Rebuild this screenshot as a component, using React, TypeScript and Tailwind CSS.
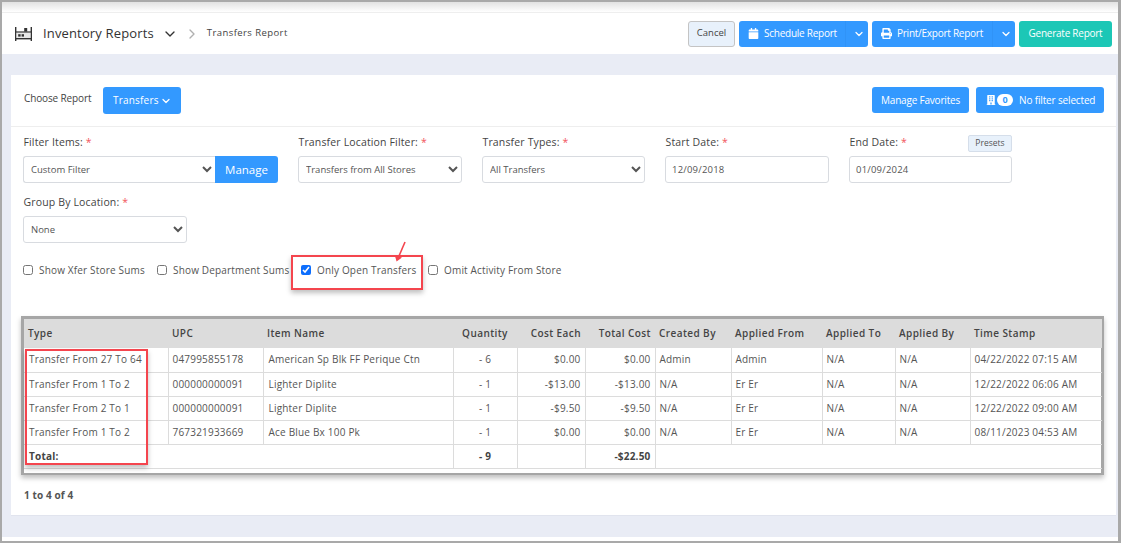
import type { ReactNode } from "react";
import { ChevronDown, ChevronRight } from "lucide-react";
import { FaBuilding, FaCalendar, FaPrint } from "react-icons/fa";

const fieldClass =
  "block h-[27px] rounded-[3px] border border-[#d8dbe0] bg-white text-[9.5px] text-[#555] outline-none";

const Label = ({ text }: { text: string }) => (
  <div className="mb-[7px] h-[14px] pl-[0.5px] text-[10.5px] leading-[14px] tracking-[0.15px] text-[#444]">
    {text} <span className="text-[#f2545b]">*</span>
  </div>
);

const SelectField = ({ label, value, width }: { label: string; value: string; width: string }) => (
  <div className={width}>
    <Label text={label} />
    <select defaultValue={value} className={`${fieldClass} w-full px-[3px]`}>
      <option>{value}</option>
    </select>
  </div>
);

const DateField = ({ label, value, width }: { label: string; value: string; width: string }) => (
  <div className={width}>
    <Label text={label} />
    <input readOnly value={value} className={`${fieldClass} w-full px-[6px] tracking-[0.2px]`} />
  </div>
);

const Check = ({ text, checked, className }: { text: string; checked?: boolean; className: string }) => (
  <label className={`flex items-center gap-[6px] text-[10px] tracking-[0.17px] whitespace-nowrap text-[#555] ${className}`}>
    <input type="checkbox" readOnly checked={!!checked} className="m-0 h-[10px] w-[10px] accent-[#0d6efd]" />
    {text}
  </label>
);

const blueBtn = "flex items-center rounded-[3px] bg-[#3399ff] text-[10px] text-white";

const SplitButton = ({ icon, text, width }: { icon: ReactNode; text: string; width: string }) => (
  <div className={`${blueBtn} h-[26px] ${width}`}>
    <span className="flex flex-1 items-center gap-[5px] pl-[9px] tracking-[-0.25px]">
      {icon}
      {text}
    </span>
    <span className="flex h-full w-[23px] items-center justify-center border-l border-[#3093f7] pl-[4px]">
      <ChevronDown size={12} strokeWidth={2.5} />
    </span>
  </div>
);

const columns = [
  { title: "Type", width: "w-[144px]", head: "text-left" },
  { title: "UPC", width: "w-[95px]", head: "text-left" },
  { title: "Item Name", width: "w-[190px]", head: "text-left" },
  { title: "Quantity", width: "w-[64px]", head: "text-center" },
  { title: "Cost Each", width: "w-[68px]", head: "text-right" },
  { title: "Total Cost", width: "w-[70px]", head: "text-right" },
  { title: "Created By", width: "w-[76px]", head: "text-left" },
  { title: "Applied From", width: "w-[91px]", head: "text-left" },
  { title: "Applied To", width: "w-[73px]", head: "text-left" },
  { title: "Applied By", width: "w-[75px]", head: "text-left" },
  { title: "Time Stamp", width: "w-[132px]", head: "text-left" },
];

const rows = [
  ["Transfer From 27 To 64", "047995855178", "American Sp Blk FF Perique Ctn", "- 6", "$0.00", "$0.00", "Admin", "Admin", "N/A", "N/A", "04/22/2022 07:15 AM"],
  ["Transfer From 1 To 2", "000000000091", "Lighter Diplite", "- 1", "-$13.00", "-$13.00", "N/A", "Er Er", "N/A", "N/A", "12/22/2022 06:06 AM"],
  ["Transfer From 2 To 1", "000000000091", "Lighter Diplite", "- 1", "-$9.50", "-$9.50", "N/A", "Er Er", "N/A", "N/A", "12/22/2022 09:00 AM"],
  ["Transfer From 1 To 2", "767321933669", "Ace Blue Bx 100 Pk", "- 1", "$0.00", "$0.00", "N/A", "Er Er", "N/A", "N/A", "08/11/2023 04:53 AM"],
];

const cellClass = (i: number) =>
  `h-[24px] border-r border-b border-[#dcdcdc] last:border-r-0 ${
    i === 0 || i === 2 ? "pr-[4px] pl-[5px]" : "px-[4px]"
  } ${i === 3 ? "text-center" : i === 4 || i === 5 ? "text-right" : ""}`;

function WarehouseIcon() {
  return (
    <svg width="17" height="14" viewBox="0 0 17 14" fill="#333">
      <rect x="0" y="0" width="1.4" height="14" />
      <rect x="15.6" y="0" width="1.4" height="14" />
      <rect x="1" y="4.4" width="15" height="1.3" />
      <rect x="9.2" y="1" width="3" height="3.6" />
      <rect x="1" y="5.6" width="15" height="5.6" fill="#cfcfcf" opacity="0.45" />
      <rect x="3.2" y="7.2" width="2.4" height="2.4" />
      <rect x="6.6" y="7.2" width="2.4" height="2.4" />
      <rect x="1" y="11" width="15" height="1.4" />
    </svg>
  );
}

export default function App() {
  return (
    <div className="relative flex h-[544px] w-[1121px] flex-col overflow-hidden bg-white font-['Open_Sans',sans-serif]">
      <div className="flex h-[543px] flex-col border-t-2 border-r-[3px] border-b-2 border-l-2 border-[#a9a9a9] bg-white">
        <div className="h-[10px] bg-gradient-to-b from-[#e2e2e2] to-white" />

        <header className="flex h-[42px] items-center border-t border-[#eeeeee] bg-white pr-[6px] pl-[13px]">
          <WarehouseIcon />
          <span className="ml-[11px] text-[13px] tracking-[0.15px] text-[#333]">Inventory Reports</span>
          <ChevronDown size={16} strokeWidth={2} className="ml-[8px] text-[#333]" />
          <ChevronRight size={16} strokeWidth={2} className="ml-[6px] text-[#b0b0b0]" />
          <span className="ml-[7px] text-[9.5px] tracking-[0.42px] text-[#444]">Transfers Report</span>
          <div className="ml-auto flex items-center gap-[4px]">
            <button className="h-[26px] w-[47px] rounded-[3px] border border-[#c4c4c4] bg-[#e8f1fb] text-[9.5px] text-[#444]">
              Cancel
            </button>
            <SplitButton icon={<FaCalendar size={11} />} text="Schedule Report" width="w-[129px]" />
            <SplitButton icon={<FaPrint size={11} />} text="Print/Export Report" width="w-[143px]" />
            <button className="h-[26px] w-[93px] rounded-[3px] bg-[#1cc7b6] text-[10px] tracking-[-0.25px] text-white">
              Generate Report
            </button>
          </div>
        </header>

        <main className="h-[483px] bg-[#e9ecf5] pt-[21px] pl-[9px]">
          <section className="h-[441px] w-[1105px] border-b border-[#e1e4ee] bg-white">
            <div className="flex h-[52px] items-start border-b border-[#eeeeee] pt-[12px] pr-[12px] pl-[13px]">
              <span className="mt-[4px] text-[10px] tracking-[-0.13px] text-[#444]">Choose Report</span>
              <button className={`${blueBtn} ml-[12px] h-[27px] w-[78px] justify-center gap-[1px] tracking-[0.2px]`}>
                Transfers <ChevronDown size={12} strokeWidth={2.5} />
              </button>
              <button className={`${blueBtn} ml-auto h-[26px] w-[97px] justify-center tracking-[-0.2px]`}>
                Manage Favorites
              </button>
              <button className={`${blueBtn} ml-[7px] h-[26px] w-[128px] pl-[10px] tracking-[-0.15px]`}>
                <FaBuilding size={10} />
                <span className="ml-[1px] flex h-[12px] w-[16px] items-center justify-center rounded-full bg-white text-[9px] font-bold text-[#3399ff]">
                  0
                </span>
                <span className="ml-[6px]">No filter selected</span>
              </button>
            </div>

            <div className="relative px-[12px] pt-[8px]">
              <button className="absolute top-[8px] left-[957px] h-[17px] w-[44px] rounded-[2px] border border-[#d5deea] bg-[#e8f1fb] text-[8.5px] text-[#555]">
                Presets
              </button>
              <div className="flex gap-[20px]">
                <div className="w-[255px]">
                  <Label text="Filter Items:" />
                  <div className="flex">
                    <select defaultValue="Custom Filter" className={`${fieldClass} w-[192px] rounded-r-none border-r-0 px-[3px]`}>
                      <option>Custom Filter</option>
                    </select>
                    <button className={`${blueBtn} h-[27px] w-[63px] justify-center rounded-l-none text-[11.5px]`}>Manage</button>
                  </div>
                </div>
                <SelectField label="Transfer Location Filter:" value="Transfers from All Stores" width="w-[164px]" />
                <SelectField label="Transfer Types:" value="All Transfers" width="w-[163px]" />
                <DateField label="Start Date:" value="12/09/2018" width="w-[164px]" />
                <DateField label="End Date:" value="01/09/2024" width="w-[163px]" />
              </div>

              <div className="mt-[12px]">
                <SelectField label="Group By Location:" value="None" width="w-[164px]" />
              </div>

              <div className="mt-[20px] flex h-[14px] items-center">
                <Check text="Show Xfer Store Sums" className="w-[134px]" />
                <Check text="Show Department Sums" className="w-[144px]" />
                <Check checked text="Only Open Transfers" className="w-[127px]" />
                <Check text="Omit Activity From Store" className="" />
              </div>
            </div>

            <div className="mt-[39px] ml-[10px] w-[1083px] border-x-[3px] border-t-[3px] border-b-2 border-[#a6a6a6] pb-[4px] shadow-[0_3px_5px_rgba(0,0,0,0.25)]">
              <table className="w-[1077px] table-fixed border-collapse text-[10px] tracking-[0.2px] text-[#555]">
                <colgroup>
                  {columns.map((c) => (
                    <col key={c.title} className={c.width} />
                  ))}
                </colgroup>
                <thead>
                  <tr className="h-[29px] bg-[#dcdcdc]">
                    {columns.map((c) => (
                      <th key={c.title} className={`px-[4px] font-semibold tracking-[0.42px] text-[#444] ${c.head}`}>
                        {c.title}
                      </th>
                    ))}
                  </tr>
                </thead>
                <tbody>
                  {rows.map((row, r) => (
                    <tr key={r}>
                      {row.map((value, i) => (
                        <td key={i} className={cellClass(i)}>
                          {value}
                        </td>
                      ))}
                    </tr>
                  ))}
                  <tr className="font-bold text-[#444]">
                    <td colSpan={3} className={cellClass(0)}>
                      Total:
                    </td>
                    <td className={cellClass(3)}>- 9</td>
                    <td className={cellClass(4)} />
                    <td className={cellClass(5)}>-$22.50</td>
                    <td colSpan={5} className={cellClass(6)} />
                  </tr>
                </tbody>
              </table>
            </div>

            <div className="mt-[13px] ml-[13px] text-[10px] font-bold tracking-[0.1px] text-[#555]">1 to 4 of 4</div>
          </section>
        </main>
      </div>

      {/* annotations drawn over the screenshot */}
      <div className="absolute top-[255px] left-[291px] h-[35px] w-[132px] border-2 border-[#f4454e] shadow-[0_3px_5px_rgba(0,0,0,0.25)]" />
      <div className="absolute top-[349px] left-[25px] h-[116px] w-[123px] border-2 border-[#f4454e] shadow-[0_3px_5px_rgba(0,0,0,0.25)]" />
      <svg className="absolute top-[241px] left-[392px]" width="16" height="24" viewBox="0 0 16 24" fill="none">
        <path d="M13 1L7 15" stroke="#f4454e" strokeWidth="1.6" />
        <path d="M2.8 14.6l7.2 2-5.4 4z" fill="#f4454e" />
      </svg>
    </div>
  );
}
